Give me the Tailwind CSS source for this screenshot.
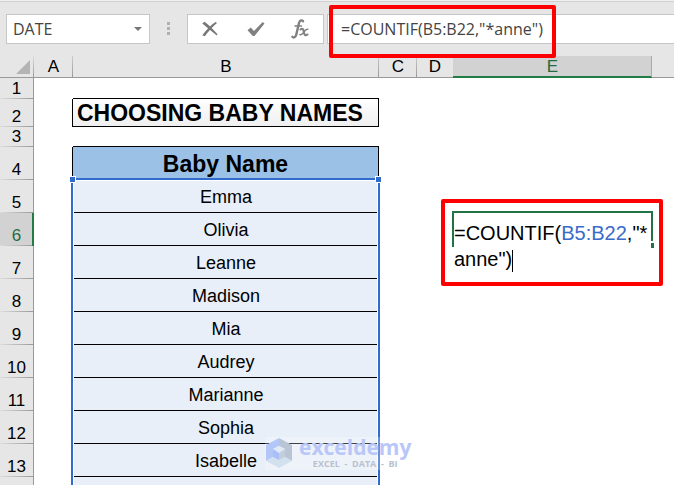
<!DOCTYPE html>
<html lang="en">
<head>
<meta charset="utf-8">
<title>Choosing Baby Names</title>
<script src="https://cdn.jsdelivr.net/npm/@tailwindcss/browser@4"></script>
</head>
<body class="relative flex h-screen flex-col overflow-hidden bg-white font-['Liberation_Sans',sans-serif] text-black">

<header class="flex h-14 shrink-0 items-start border-t border-[#f0f0f0] bg-[#e6e6e6] font-['Open_Sans',sans-serif] text-[#444]">
  <div class="flex w-full items-center border-t border-[#d0d0d0] pt-3 pl-1.5">
    <div class="relative h-[30px] w-36 shrink-0">
      <select aria-label="Name box" class="h-full w-full appearance-none border border-[#c6c6c6] bg-white pl-1.5 text-base leading-6 font-['Open_Sans',sans-serif] outline-none"><option>DATE</option></select>
      <svg class="pointer-events-none absolute top-[13px] right-2 h-1 w-2" viewBox="0 0 8 4"><path d="M0 0h8L4 4z" fill="#777"/></svg>
    </div>
    <svg class="mx-4 h-[14px] w-[5px] shrink-0" viewBox="0 0 5 14" fill="#b0b0b0"><path d="M1 0h3v3H1zM1 5h3v3H1zM1 10h3v3H1z"/></svg>
    <div class="flex h-[30px] w-[137px] shrink-0 items-center border border-[#c6c6c6] bg-white">
      <button type="button" aria-label="Cancel" class="flex h-7 w-11 items-center justify-center"><svg class="h-4 w-4" viewBox="0 0 16 16" fill="#777"><path d="M.3 2.600L2.500.8C6 3.500 11 8 15.500 13.300L14.800 14.500C10 11 5 6.500.3 2.600z"/><path d="M13.500 1l1.500 1C11 5.500 6.500 10 2.800 15.200L.3 14.300C4 9 9 4 13.500 1z"/></svg></button>
      <button type="button" aria-label="Enter" class="flex h-7 w-12 items-center justify-center"><svg class="h-4 w-[18px]" viewBox="0 0 18 16"><path d="M.5 9.300L3.700 6.500 7 10 15.700 1 17.500 2.500 7.500 15H5.800z" fill="#808080"/></svg></button>
      <button type="button" aria-label="Insert function" class="flex h-7 w-10 items-center justify-center"><svg class="h-5 w-[18px]" viewBox="0 0 18 20" fill="none" stroke="#808080" stroke-linecap="round"><path d="M12 2.200C11 .8 8.800 1 8 4L5.300 15.500C4.600 18.500 2.500 19 1.400 17.800" stroke-width="2.400"/><path d="M4 7h6.500" stroke-width="1.500"/><path d="M9.500 10.500c2-1.800 3 0 3.300 2.300s1.200 4.700 3.700 2.700" stroke-width="2.100"/><path d="M16.700 10.300c-1.700-.5-2.700 1.200-3.800 2.700s-2.200 3.300-4 2.600" stroke-width="1.500"/></svg></button>
    </div>
    <input aria-label="Formula" type="text" value='=COUNTIF(B5:B22,"*anne")' class="ml-[3px] h-[30px] min-w-0 grow border border-r-0 border-[#c6c6c6] bg-white pl-[13px] text-base leading-6 font-['Open_Sans',sans-serif] outline-none">
  </div>
</header>

<main class="min-h-0 grow overflow-hidden">
<table class="w-full table-fixed border-separate border-spacing-0 text-center text-lg">
  <colgroup><col class="w-[34px]"><col class="w-[39px]"><col class="w-[306px]"><col class="w-[38px]"><col class="w-9"><col class="w-[199px]"><col></colgroup>
  <thead class="text-[17px] leading-5">
    <tr class="h-[22px] bg-[#e6e6e6] *:border-b *:border-[#999] *:p-0 *:font-normal">
      <td class="bg-[linear-gradient(to_bottom,#ddd,#999)] bg-[length:1px_100%] bg-right bg-no-repeat"><svg class="ml-4 h-[14px] w-[14px]" viewBox="0 0 14 14"><path d="M14 0v14H0z" fill="#b4b4b4"/></svg></td>
      <th scope="col" class="bg-[linear-gradient(to_bottom,#ccc,#999)] bg-[length:1px_100%] bg-right bg-no-repeat">A</th>
      <th scope="col" class="bg-[linear-gradient(to_bottom,#ccc,#999)] bg-[length:1px_100%] bg-right bg-no-repeat">B</th>
      <th scope="col" class="bg-[linear-gradient(to_bottom,#ccc,#999)] bg-[length:1px_100%] bg-right bg-no-repeat">C</th>
      <th scope="col">D</th>
      <th scope="col" class="relative bg-[#d2d2d2] text-[#1f6b43]">E<span class="absolute inset-x-0 -bottom-px h-0.5 bg-[#217c46]"></span><span class="absolute inset-y-0 right-0 w-px bg-[#aaa]"></span></th>
      <td></td>
    </tr>
  </thead>
  <tbody class="[&_th]:border-r [&_th]:border-[#999] [&_th]:bg-[#e6e6e6] [&_th]:bg-[linear-gradient(to_right,#ddd,#999)] [&_th]:bg-[length:100%_1px] [&_th]:bg-bottom [&_th]:bg-no-repeat [&_th]:p-0 [&_th]:pb-px [&_th]:align-bottom [&_th]:text-[17px] [&_th]:leading-[18px] [&_th]:font-normal [&_td]:p-0">
    <tr class="h-[21px]"><th scope="row">1</th><td></td><td class="border-b border-black"></td></tr>
    <tr class="h-7"><th scope="row">2</th><td class="border-r border-black"></td><td class="border-r border-b border-black bg-linear-to-b from-white to-[#efefef] text-left text-[23px] leading-[26px] font-bold"><div class="pl-1">CHOOSING BABY NAMES</div></td></tr>
    <tr class="h-5"><th scope="row">3</th><td></td><td class="border-b border-black"></td></tr>
    <tr class="h-[33px]"><th scope="row">4</th><td class="border-r border-black"></td><td class="border-r border-black bg-[#9bc2e6] text-[23px] leading-8 font-bold">Baby Name</td></tr>
    <tr class="h-[33px]"><th scope="row">5</th><td></td><td class="relative border-b border-black bg-[#e8eff9]"><div class="pt-0.5">Emma</div>
      <span class="pointer-events-none absolute -top-0.5 -right-px -left-0.5 h-[360px] border-2 border-[#316bcd]"><span class="absolute inset-0 border border-white"></span></span>
      <span class="absolute -top-1 -left-1 size-[7px] border border-white bg-[#316bcd]"></span>
      <span class="absolute -top-1 -right-[3px] size-[7px] border border-white bg-[#316bcd]"></span>
    </td></tr>
    <tr class="h-[33px]"><th scope="row" class="relative !bg-[#d2d2d2] text-[#1f6b43]">6<span class="absolute inset-y-0 -right-px w-0.5 bg-[#217c46]"></span></th><td></td><td class="border-b border-black bg-[#e8eff9]"><div class="pt-0.5">Olivia</div></td><td></td><td></td>
      <td class="relative">
        <div class="absolute -top-0.5 -right-px -left-px text-left text-xl leading-[26px]">
          <div contenteditable="true" role="textbox" aria-label="Cell E6" class="bg-white pt-[9px] pl-0.5 outline-none">=COUNTIF(<span class="text-[#3a6bc9]">B5:B22</span>,"*<br>anne")<span class="inline-block h-[22px] w-px bg-black align-middle"></span></div>
          <span class="absolute top-0 left-0 h-9 w-full border-t-2 border-l-2 border-[#217346]"></span>
          <span class="absolute top-0 right-0 h-[30px] w-0.5 bg-[#217346]"></span>
          <span class="absolute top-8 -right-px h-[5px] w-[3px] bg-[#217346]"></span>
          <span class="absolute -top-3 -right-2.5 -left-[11px] h-[87px] rounded-xs border-4 border-[#f00]"></span>
        </div>
      </td></tr>
    <tr class="h-[33px]"><th scope="row">7</th><td></td><td class="border-b border-black bg-[#e8eff9]"><div class="pt-0.5">Leanne</div></td></tr>
    <tr class="h-[33px]"><th scope="row">8</th><td></td><td class="border-b border-black bg-[#e8eff9]"><div class="pt-0.5">Madison</div></td></tr>
    <tr class="h-[33px]"><th scope="row">9</th><td></td><td class="border-b border-black bg-[#e8eff9]"><div class="pt-0.5">Mia</div></td></tr>
    <tr class="h-[33px]"><th scope="row">10</th><td></td><td class="border-b border-black bg-[#e8eff9]"><div class="pt-0.5">Audrey</div></td></tr>
    <tr class="h-[33px]"><th scope="row">11</th><td></td><td class="border-b border-black bg-[#e8eff9]"><div class="pt-0.5">Marianne</div></td></tr>
    <tr class="h-[33px]"><th scope="row">12</th><td></td><td class="border-b border-black bg-[#e8eff9]"><div class="pt-0.5">Sophia</div></td></tr>
    <tr class="h-[33px]"><th scope="row">13</th><td></td><td class="border-b border-black bg-[#e8eff9]"><div class="pt-0.5">Isabelle</div></td></tr>
    <tr class="h-[33px]"><th scope="row"></th><td></td><td class="border-b border-black bg-[#e8eff9]"></td></tr>
  </tbody>
</table>
</main>

<div class="pointer-events-none absolute top-[5px] left-[329px] h-[53px] w-[227px] rounded-xs border-4 border-[#f00]"></div>

<div class="pointer-events-none absolute top-[437px] left-[265px] flex h-[33px] w-36 items-start gap-1.5 bg-white/25 font-['Open_Sans',sans-serif] font-bold">
  <svg class="h-8 w-7 shrink-0" viewBox="0 0 28 32"><path d="M14 1L1 8v16l7-4v-8l6-3z" fill="#b3c6f8"/><path d="M14 1l13 7v16l-7-4v-8l-6-3z" fill="#b9c4d4"/><path d="M1 24l7-4 6 3 6-3 7 4-13 7z" fill="#d3e1ee"/><path d="M14 9l6 3v8l-6 3-6-3v-8z" fill="#dfe9f8"/><path d="M8 12l6 4v7l-6-3z" fill="#a9bff7"/><path d="M14 16l6-4v8l-6 3z" fill="#c3cedd"/></svg>
  <div class="flex flex-col items-center">
    <span class="text-[21px] leading-[21px] text-[#b8c7f7]">exceldemy</span>
    <span class="text-[9px] leading-[11px] whitespace-pre text-[#b9c1cf]">EXCEL  -  DATA  -  BI</span>
  </div>
</div>
</body>
</html>
